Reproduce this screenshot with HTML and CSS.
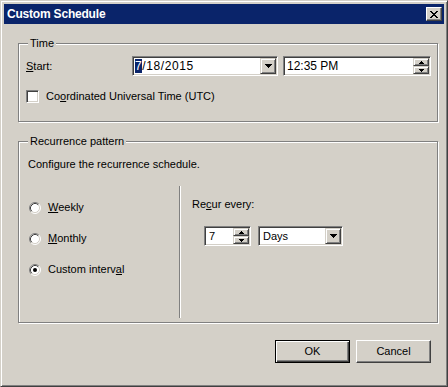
FILE: index.html
```html
<!DOCTYPE html>
<html lang="en">
<head>
  <meta charset="UTF-8" />
  <title>Custom Schedule</title>
  <link rel="stylesheet" href="styles.css">
</head>
<body>
  <div class="window">
    <div class="titlebar">
      <span class="title">Custom Schedule</span>
      <button class="close" aria-label="Close">
        <svg width="8" height="7" viewBox="0 0 8 7"><path d="M0 0h2v1H0zM6 0h2v1H6zM1 1h2v1H1zM5 1h2v1H5zM2 2h4v1H2zM3 3h2v1H3zM2 4h4v1H2zM1 5h2v1H1zM5 5h2v1H5zM0 6h2v1H0zM6 6h2v1H6z"/></svg>
      </button>
    </div>

    <div class="body">
      <fieldset class="group group-time">
        <legend>Time</legend>
        <div class="row">
          <label class="start-label"><u>S</u>tart:</label>
          <div class="field date">
            <span class="value"><span class="sel">7</span>/18/2015</span>
            <span class="drop">
              <svg width="7" height="4" viewBox="0 0 7 4"><path d="M0 0h7v1H0zM1 1h5v1H1zM2 2h3v1H2zM3 3h1v1H3z"/></svg>
            </span>
          </div>
          <div class="field time">
            <span class="value">12:35 PM</span>
            <span class="spin">
              <span class="spin-btn"><svg width="5" height="3" viewBox="0 0 5 3"><path d="M2 0h1v1H2zM1 1h3v1H1zM0 2h5v1H0z"/></svg></span>
              <span class="spin-btn"><svg width="5" height="3" viewBox="0 0 5 3"><path d="M0 0h5v1H0zM1 1h3v1H1zM2 2h1v1H2z"/></svg></span>
            </span>
          </div>
        </div>
        <label class="check"><span class="box"></span><span>Co<u>o</u>rdinated Universal Time (UTC)</span></label>
      </fieldset>

      <fieldset class="group group-recur">
        <legend>Recurrence pattern</legend>
        <p class="hint">Configure the recurrence schedule.</p>
        <div class="columns">
          <div class="options">
            <label class="radio">
              <svg width="12" height="12" viewBox="0 0 12 12"><circle cx="6" cy="6" r="5" fill="#fff"/><path d="M2.11 9.89A5.5 5.5 0 0 1 9.89 2.11" fill="none" stroke="#808080"/><path d="M9.89 2.11A5.5 5.5 0 0 1 2.11 9.89" fill="none" stroke="#fff"/><path d="M2.82 9.18A4.5 4.5 0 0 1 9.18 2.82" fill="none" stroke="#404040"/><path d="M9.18 2.82A4.5 4.5 0 0 1 2.82 9.18" fill="none" stroke="#d4d0c8"/></svg>
              <span><u>W</u>eekly</span>
            </label>
            <label class="radio">
              <svg width="12" height="12" viewBox="0 0 12 12"><circle cx="6" cy="6" r="5" fill="#fff"/><path d="M2.11 9.89A5.5 5.5 0 0 1 9.89 2.11" fill="none" stroke="#808080"/><path d="M9.89 2.11A5.5 5.5 0 0 1 2.11 9.89" fill="none" stroke="#fff"/><path d="M2.82 9.18A4.5 4.5 0 0 1 9.18 2.82" fill="none" stroke="#404040"/><path d="M9.18 2.82A4.5 4.5 0 0 1 2.82 9.18" fill="none" stroke="#d4d0c8"/></svg>
              <span><u>M</u>onthly</span>
            </label>
            <label class="radio">
              <svg width="12" height="12" viewBox="0 0 12 12"><circle cx="6" cy="6" r="5" fill="#fff"/><path d="M2.11 9.89A5.5 5.5 0 0 1 9.89 2.11" fill="none" stroke="#808080"/><path d="M9.89 2.11A5.5 5.5 0 0 1 2.11 9.89" fill="none" stroke="#fff"/><path d="M2.82 9.18A4.5 4.5 0 0 1 9.18 2.82" fill="none" stroke="#404040"/><path d="M9.18 2.82A4.5 4.5 0 0 1 2.82 9.18" fill="none" stroke="#d4d0c8"/><circle cx="6" cy="6" r="2" fill="#000"/></svg>
              <span>Custom interv<u>a</u>l</span>
            </label>
          </div>
          <div class="interval">
            <div class="recur-label">Re<u>c</u>ur every:</div>
            <div class="row">
              <div class="field count">
                <span class="value">7</span>
                <span class="spin">
                  <span class="spin-btn"><svg width="5" height="3" viewBox="0 0 5 3"><path d="M2 0h1v1H2zM1 1h3v1H1zM0 2h5v1H0z"/></svg></span>
                  <span class="spin-btn"><svg width="5" height="3" viewBox="0 0 5 3"><path d="M0 0h5v1H0zM1 1h3v1H1zM2 2h1v1H2z"/></svg></span>
                </span>
              </div>
              <div class="field unit">
                <span class="value">Days</span>
                <span class="drop">
                  <svg width="7" height="4" viewBox="0 0 7 4"><path d="M0 0h7v1H0zM1 1h5v1H1zM2 2h3v1H2zM3 3h1v1H3z"/></svg>
                </span>
              </div>
            </div>
          </div>
        </div>
      </fieldset>

      <div class="actions">
        <button class="btn default">OK</button>
        <button class="btn">Cancel</button>
      </div>
    </div>
  </div>
</body>
</html>
```

FILE: styles.css
```css
* { box-sizing: border-box; }

html, body {
  margin: 0;
  background: #d4d0c8;
  font: 11px/13px "Liberation Sans", Arial, sans-serif;
  color: #000;
}

.window {
  width: 448px;
  height: 387px;
  display: flex;
  flex-direction: column;
  padding: 3px;
  border: 1px solid;
  border-color: #d4d0c8 #404040 #404040 #d4d0c8;
  box-shadow: inset 1px 1px #fff, inset -1px -1px #808080;
}

.titlebar {
  height: 20px;
  display: flex;
  align-items: center;
  justify-content: space-between;
  padding: 0 2px 0 3px;
  background: #0a246a;
}
.title {
  color: #fff;
  font-weight: bold;
  font-size: 12px;
  letter-spacing: -0.2px;
}
.close {
  width: 16px;
  height: 14px;
  padding: 0;
  display: flex;
  align-items: center;
  justify-content: center;
  background: #d4d0c8;
  border: 1px solid;
  border-color: #fff #404040 #404040 #fff;
  box-shadow: inset -1px -1px #808080;
}

.body {
  flex: 1;
  padding: 13px 6px 0 14px;
}

.group {
  margin: 0;
  min-width: 0;
  border: 1px solid #808080;
  box-shadow: 1px 1px 0 #fff, inset 1px 1px 0 #fff;
}
.group legend {
  padding: 0 2px;
  line-height: 13px;
  background: #d4d0c8;
}

.group-time { padding: 6px 5px 18px 7px; }
.group-time legend { margin-left: 2px; }

.row {
  display: flex;
  align-items: center;
}
.start-label { width: 106px; }

.field {
  display: flex;
  height: 20px;
  padding: 1px;
  background: #fff;
  border: 1px solid;
  border-color: #808080 #fff #fff #808080;
  box-shadow: inset 1px 1px #404040, inset -1px -1px #d4d0c8;
}
.field .value {
  flex: 1;
  padding-left: 1px;
  line-height: 16px;
  white-space: nowrap;
  overflow: hidden;
}
.date { width: 146px; }
.date .value { font-size: 12px; letter-spacing: 0.6px; }
.time { width: 148px; margin-left: 5px; }
.time .value { font-size: 12px; padding-left: 2px; }
.sel { background: #0a246a; color: #fff; }

.drop, .spin-btn {
  display: flex;
  align-items: center;
  justify-content: center;
  background: #d4d0c8;
  border: 1px solid;
  border-color: #d4d0c8 #404040 #404040 #d4d0c8;
  box-shadow: inset 1px 1px #fff, inset -1px -1px #808080;
}
.drop { width: 16px; height: 16px; }
.spin {
  width: 16px;
  display: flex;
  flex-direction: column;
}
.spin-btn { height: 8px; }

.check {
  display: flex;
  align-items: center;
  gap: 7px;
  margin-top: 14px;
}
.box {
  width: 13px;
  height: 13px;
  background: #fff;
  border: 1px solid;
  border-color: #808080 #fff #fff #808080;
  box-shadow: inset 1px 1px #404040, inset -1px -1px #d4d0c8;
}

.group-recur {
  margin-top: 13px;
  padding: 10px 0 4px 9px;
}
.hint { margin: 0; }

.columns {
  display: flex;
  height: 132px;
  margin-top: 15px;
}
.options {
  width: 152px;
  padding: 15px 0 0 1px;
  display: flex;
  flex-direction: column;
  gap: 18px;
  border-right: 1px solid #808080;
  box-shadow: 1px 0 0 #fff;
}
.radio {
  display: flex;
  align-items: center;
  gap: 7px;
  height: 13px;
}
.interval { padding: 12px 0 0 12px; }
.interval .row {
  margin-top: 15px;
  padding-left: 12px;
}
.count { width: 47px; }
.count .value { padding-left: 3px; }
.unit { width: 85px; margin-left: 7px; }
.unit .value { padding-left: 3px; }

.actions {
  display: flex;
  justify-content: flex-end;
  gap: 6px;
  margin-top: 17px;
  padding-right: 7px;
}
.btn {
  width: 75px;
  height: 23px;
  padding: 0;
  font: inherit;
  color: #000;
  background: #d4d0c8;
  border: 1px solid;
  border-color: #fff #404040 #404040 #fff;
  box-shadow: inset -1px -1px #808080;
}
.btn.default {
  border-color: #000;
  box-shadow: inset 1px 1px #fff, inset -1px -1px #404040, inset -2px -2px #808080;
}
```
